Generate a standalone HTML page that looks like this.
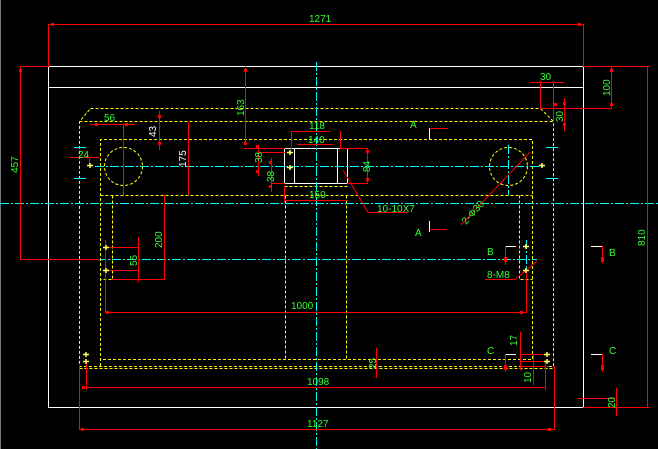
<!DOCTYPE html>
<html><head><style>
html,body{margin:0;padding:0;background:#000;width:658px;height:449px;overflow:hidden}
svg{display:block}
text{font-family:"Liberation Sans",sans-serif;font-size:10px;fill:#33ff33}
</style></head><body>
<svg width="658" height="449" viewBox="0 0 658 449" xmlns="http://www.w3.org/2000/svg">
<rect x="0" y="0" width="1" height="449" fill="#777"/>
<!-- white outline -->
<g stroke="#fff" fill="none" stroke-width="1">
<rect x="48.5" y="66.5" width="535" height="341"/>
<line x1="48.5" y1="87.5" x2="583.5" y2="87.5"/>
<rect x="284.5" y="148.5" width="63" height="35"/>
<line x1="294.5" y1="148.5" x2="294.5" y2="183.5"/>
<line x1="337.5" y1="148.5" x2="337.5" y2="183.5"/>
<path d="M429.5 139V128M429.5 232V221M505 246.5H516M591 246.5H602M505 354.5H516M591 354.5H602"/>
</g>
<!-- yellow dashed -->
<g stroke="#ffff00" fill="none" stroke-width="1" stroke-dasharray="3,2">
<path d="M90.5 108.5H540.5L553.5 121.5V366.5H79.5V121.5Z"/>
<line x1="79.5" y1="121.5" x2="553.5" y2="121.5"/>
<line x1="79.5" y1="368.5" x2="553.5" y2="368.5"/>
<path d="M100.5 366V139.5H532.5V359.5H100.5"/>
<line x1="100.5" y1="195.5" x2="532.5" y2="195.5"/>
<path d="M112.5 195.5V279.5H100.5M519.5 195.5V279.5H532.5"/>
<path d="M285.5 195.5V359.5M346.5 195.5V359.5"/>
<path d="M284.5 186.5H347.5"/>
<circle cx="123.5" cy="166.5" r="19"/>
<circle cx="508.5" cy="166.5" r="19"/>
</g>
<!-- cyan centerlines -->
<g stroke="#00ffff" fill="none" stroke-width="1" stroke-dasharray="9,2,2,2">
<line x1="0" y1="203.5" x2="658" y2="203.5"/>
<line x1="95" y1="166.5" x2="545" y2="166.5"/>
<line x1="97" y1="259.5" x2="537" y2="259.5"/>
<line x1="316.5" y1="62" x2="316.5" y2="449"/>
<line x1="123.5" y1="145" x2="123.5" y2="195"/>
<line x1="508.5" y1="145" x2="508.5" y2="195"/>
<line x1="526.5" y1="240" x2="526.5" y2="275"/>
</g>
<g stroke="#00ffff" stroke-width="1">
<path d="M74 147.5H86M74 178.5H86M546 147.5H558M546 178.5H558"/>
</g>
<!-- red dims -->
<g stroke="#ff0000" fill="none" stroke-width="1">
<path d="M48.5 24.5H583.5M48.5 24V66M583.5 24V66"/>
<path d="M20.5 66.5V259.5M19 66.5H49M20 259.5H100"/>
<path d="M647.5 66V407M583 66.5H650M583 407.5H650"/>
<path d="M611.5 66V108.5M540 108.5H612M530 82.5H564M540.5 81V108M553.5 81V121M564.5 98V131"/>
<path d="M245.5 66V143.5M244 148.5H285"/>
<path d="M90 124.5H135M123.5 124V195M159.5 111V150M188.5 122V195M69 157.5H99M89.5 157V165"/>
<path d="M258.5 146V176M258 152.5H285M271.5 158V192M271 183.5H285M291.5 131V150M291 131.5H330M297 144.5H333M340.5 131V148M284.5 200.5H347.5M284.5 186V203"/>
<path d="M367.5 148V183M340 148.5H368M347 183.5H368"/>
<path d="M343 170L368 212.5H408"/>
<path d="M530 152L461 225"/>
<path d="M429.5 128.5H448M429.5 229.5H447"/>
<path d="M505.5 246V265M602.5 246V263M505.5 354V372M602.5 354V372"/>
<path d="M164.5 195V279.5M112 279.5H165M107 247.5H138M107 270.5H138M138.5 237V282"/>
<path d="M105.5 240V313M526.5 270V313M105 312.5H527"/>
<path d="M485 279.5H515L537 261"/>
<path d="M86 387.5H545M86.5 361V390M545.5 361V390"/>
<path d="M79.5 366V430M554.5 366V430M79 429.5H555"/>
<path d="M520 354.5H548M520 361.5H548M520 366.5H548M520.5 332V370M533.5 354V385"/>
<path d="M376.5 348V378M578 398.5H615M616.5 388V416"/>
</g>
<g fill="#ff0000">
<rect x="51" y="23" width="3" height="3"/><rect x="578" y="23" width="3" height="3"/>
<rect x="19" y="69" width="3" height="3"/><rect x="610" y="69" width="3" height="3"/><rect x="610" y="103" width="3" height="3"/>
<rect x="244" y="69" width="3" height="3"/><rect x="244" y="142" width="3" height="3"/>
<rect x="158" y="115" width="3" height="3"/><rect x="158" y="142" width="3" height="3"/>
<rect x="95" y="123" width="3" height="3"/><rect x="125" y="123" width="3" height="3"/>
<rect x="256" y="145" width="3" height="3"/><rect x="256" y="170" width="3" height="3"/>
<rect x="269" y="161" width="3" height="3"/><rect x="269" y="185" width="3" height="3"/>
<rect x="366" y="150" width="3" height="3"/><rect x="366" y="178" width="3" height="3"/>
<rect x="82" y="386" width="3" height="3"/><rect x="81" y="428" width="3" height="3"/><rect x="548" y="428" width="3" height="3"/>
<rect x="106" y="311" width="3" height="3"/><rect x="520" y="311" width="3" height="3"/>
<rect x="554" y="103" width="3" height="3"/><rect x="563" y="102" width="3" height="3"/><rect x="563" y="123" width="3" height="3"/>
<rect x="504" y="257" width="3" height="5"/><rect x="601" y="257" width="3" height="5"/><rect x="504" y="365" width="3" height="5"/><rect x="601" y="365" width="3" height="5"/>
</g>
<!-- markers -->
<g stroke="#ffff66" stroke-width="1.5">
<path d="M103 247.5h6M106 245v5M103 270.5h6M106 268v5M83 354.5h6M86 352v5M83 361.5h6M86 359v5M523 246.5h6M526 244v5M523 270.5h6M526 268v5M544 354.5h6M547 352v5M544 361.5h6M547 359v5M87 165.5h6M90 163v5M287 152.5h6M290 150v5M287 167.5h6M290 165v5M539 165.5h6M542 163v5"/>
</g>
<!-- texts -->
<text x="309" y="22">1271</text>
<text x="540" y="80">30</text>
<text x="410" y="128">A</text>
<text x="415" y="236" >A</text>
<text x="487" y="255">B</text>
<text x="609" y="256">B</text>
<text x="487" y="354">C</text>
<text x="609" y="354">C</text>
<text x="104" y="121">56</text>
<text x="78" y="158">24</text>
<text x="309" y="129">118</text>
<text x="308" y="143">140</text>
<text x="309" y="198">150</text>
<text x="291" y="309">1000</text>
<text x="307" y="385">1098</text>
<text x="307" y="427">1127</text>
<text x="377" y="212">10-10X7</text>
<text x="487" y="278">8-M8</text>
<text transform="translate(18,173) rotate(-90)">457</text>
<text transform="translate(645,246) rotate(-90)">810</text>
<text transform="translate(610,96) rotate(-90)">100</text>
<text transform="translate(563,122) rotate(-90)">30</text>
<text transform="translate(244,116) rotate(-90)">163</text>
<text transform="translate(156,137) rotate(-90)" style="fill:#fff">43</text>
<text transform="translate(186,167) rotate(-90)" style="fill:#fff">175</text>
<text transform="translate(262,163) rotate(-90)">38</text>
<text transform="translate(274,182) rotate(-90)">38</text>
<text transform="translate(370,172) rotate(-90)">84</text>
<text transform="translate(162,248) rotate(-90)">200</text>
<text transform="translate(137,266) rotate(-90)">55</text>
<text transform="translate(466,225) rotate(-48)">2-Φ30</text>
<text transform="translate(517,346) rotate(-90)">17</text>
<text transform="translate(531,383) rotate(-90)">10</text>
<text transform="translate(376,369) rotate(-90)">25</text>
<text transform="translate(615,408) rotate(-90)">20</text>
</svg>
</body></html>
